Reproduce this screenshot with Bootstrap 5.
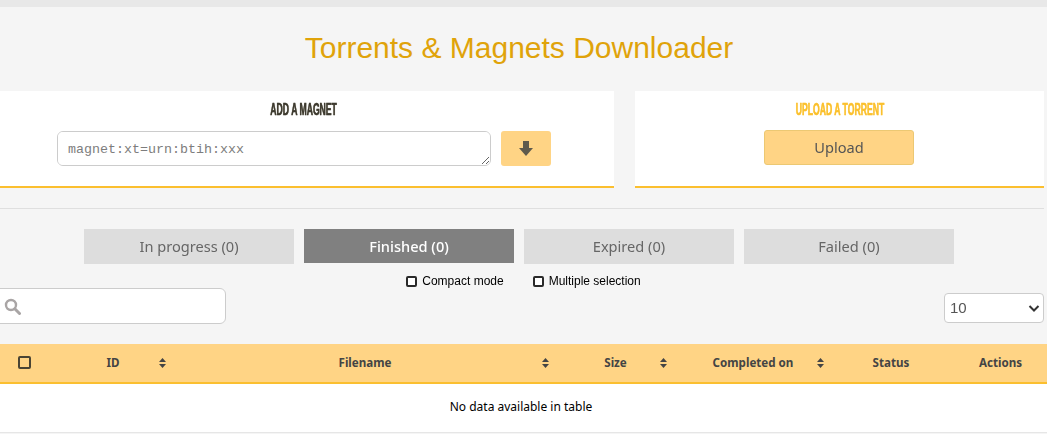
<!DOCTYPE html>
<html lang="en">
<head>
  <meta charset="UTF-8">
  <meta name="viewport" content="width=device-width, initial-scale=1.0">
  <title>Torrents &amp; Magnets Downloader</title>
  <link href="https://cdn.jsdelivr.net/npm/bootstrap@5.3.0/dist/css/bootstrap.min.css" rel="stylesheet">
  <style>
    html, body { overflow: hidden; }
    body { background: #f5f5f5; font-family: "Noto Sans", sans-serif; height: 434px; }
    .top-strip { height: 7px; background: #e8e8e8; }
    .wrap { width: 1050px; margin-left: -6px; }
    .page-title { font-family: "Liberation Sans", Arial, sans-serif; font-size: 30px; line-height: 34px; color: #e0a30a; text-align: center; margin: 0; padding: 24px 0 26px; font-weight: 400; }
    .panel-box { background: #fff; border-bottom: 2px solid #fbbf2f; height: 97px; }
    .panel-left { width: 620px; }
    .panel-right { width: 409px; margin-left: 21px; }
    .panel-head { font-family: "Liberation Sans", sans-serif; font-weight: 700; font-size: 16px; line-height: 16px; text-align: center; margin: 0; padding-top: 11px; height: 40px; text-transform: uppercase; -webkit-text-stroke: .5px currentColor; }
    .panel-head span { display: inline-block; transform: scaleX(.54); white-space: nowrap; }
    .head-dark { color: #3d3a30; text-shadow: 0 0 1px #8a8468; }
    .head-amber { color: #fbc02d; text-shadow: 0 0 1px #fde3a0; }
    .magnet-input { width: 434px; height: 35px; min-height: 35px; font-family: "Liberation Mono", monospace; font-size: 13.33px; line-height: 18px; padding: 9px 10px 7px; border-color: #ccc; }
    .magnet-input::placeholder { color: #7d7d7d; }
    .go-btn { width: 50px; height: 35px; background: #ffd485; border: 0; border-radius: 3px; padding: 0; margin-left: 10px; }
    .go-btn svg { width: 14px; height: 15px; display: block; margin: 0 auto; }
    .upload-btn { width: 150px; height: 35px; background: #ffd485; border: 1px solid #ecc873; color: #555; font-size: 14.6px; padding: 0; line-height: 33px; border-radius: 3px; margin: -1px 0 0 -1px; }
    .divider { border: 0; border-top: 1px solid #c9c9c9; margin: 20px 0 20px; opacity: .5; }
    .tab-row { gap: 10px; }
    .tab-item { width: 210px; height: 35px; line-height: 35px; background: #ddd; color: #666; font-size: 14.6px; text-align: center; }
    .tab-item.is-on { height: 34px; line-height: 34px; background: #808080; color: #fff; font-weight: 500; }
    .opt-row { font-family: "Liberation Sans", Arial, sans-serif; font-size: 12px; color: #000; height: 20px; margin-top: 5px; padding-left: 10px; gap: 30px; }
    .opt-row label { display: flex; align-items: center; height: 24px; }
    .opt-box { width: 11px; height: 11px; border: 2px solid #2a2a2a; border-radius: 2px; background: #fff; margin-right: 5px; margin-left: -1px; }
    .tool-row { height: 36px; margin-top: -1px; }
    .search-box { width: 232px; height: 36px; background: #fff; border: 1px solid #ccc; border-radius: 6px; padding-left: 9px; }
    .search-box svg { width: 17px; height: 17px; }
    .size-select { width: 100px; height: 30px; padding: 2px 5px; font-family: "Liberation Sans", Arial, sans-serif; font-size: 15px; color: #555; border-color: #ccc; border-radius: 4px; margin-top: 5px; background-position: right 3px center; background-size: 12px 10px; background-image: url("data:image/svg+xml,%3csvg xmlns='http://www.w3.org/2000/svg' viewBox='0 0 12 10'%3e%3cpath fill='none' stroke='%23333' stroke-width='2' d='M1.500 3l4.500 4.500L10.500 3'/%3e%3c/svg%3e"); }
    .grid-table { table-layout: fixed; width: 1047px; margin: 20px 0 0; background: #fff; }
    .grid-table th { position: relative; background: #ffd485; height: 39px; padding: 0 9px 0 16px; font-size: 11.6px; font-weight: 700; color: #444; text-align: center; vertical-align: middle; border-bottom: 2px solid #fbbf2f; box-shadow: none; }
    .grid-table td { height: 49px; padding: 0 5px 2px 0; font-size: 12px; color: #000; text-align: center; vertical-align: middle; background: #fff; border-bottom: 1px solid #e6e6e6; box-shadow: none; }
    .sort-mark { position: absolute; right: 4px; top: 14px; width: 7px; height: 10px; }
    .all-box { display: block; width: 13px; height: 13px; border: 2px solid #4a4434; border-radius: 2px; background: transparent; margin: -1px 0 0 1px; }
    .w1 { width: 49px; } .w2 { width: 121px; } .w3 { width: 383px; } .w4 { width: 118px; } .w5 { width: 157px; } .w6 { width: 119px; } .w7 { width: 100px; }
  </style>
</head>
<body>
  <div class="top-strip"></div>
  <div class="wrap">
    <h1 class="page-title">Torrents &amp; Magnets Downloader</h1>
    <div class="d-flex">
      <div class="panel-box panel-left">
        <h2 class="panel-head head-dark"><span>Add a magnet</span></h2>
        <div class="d-flex justify-content-center">
          <textarea class="form-control magnet-input" rows="1" placeholder="magnet:xt=urn:btih:xxx"></textarea>
          <button class="btn go-btn" type="button" aria-label="Add">
            <svg viewBox="0 0 14 15"><path fill="#5f5a4c" d="M4 0h6v7h4l-7 8-7-8h4z"/></svg>
          </button>
        </div>
      </div>
      <div class="panel-box panel-right text-center">
        <h2 class="panel-head head-amber"><span>Upload a torrent</span></h2>
        <button class="btn upload-btn" type="button">Upload</button>
      </div>
    </div>
    <hr class="divider">
    <div class="d-flex justify-content-center tab-row">
      <div class="tab-item">In progress (0)</div>
      <div class="tab-item is-on">Finished (0)</div>
      <div class="tab-item">Expired (0)</div>
      <div class="tab-item">Failed (0)</div>
    </div>
    <div class="d-flex justify-content-center opt-row">
      <label><span class="opt-box"></span>Compact mode</label>
      <label><span class="opt-box"></span>Multiple selection</label>
    </div>
    <div class="d-flex justify-content-between align-items-start tool-row">
      <div class="search-box d-flex align-items-center">
        <svg viewBox="0 0 17 17"><circle cx="7" cy="7" r="5" fill="none" stroke="#a9a5a5" stroke-width="2.400"/><path d="M10.800 10.800l4.700 4.700" stroke="#a9a5a5" stroke-width="3" stroke-linecap="round"/></svg>
      </div>
      <select class="form-select size-select"><option>10</option><option>25</option><option>50</option></select>
    </div>
  </div>
  <table class="table grid-table">
    <thead>
      <tr>
        <th class="w1 px-0"><span class="all-box mx-auto"></span></th>
        <th class="w2">ID<svg class="sort-mark" viewBox="0 0 7 10"><path fill="#444" d="M3.500 0L7 4H0zM3.500 10L0 6h7z"/></svg></th>
        <th class="w3">Filename<svg class="sort-mark" viewBox="0 0 7 10"><path fill="#444" d="M3.500 0L7 4H0zM3.500 10L0 6h7z"/></svg></th>
        <th class="w4">Size<svg class="sort-mark" viewBox="0 0 7 10"><path fill="#444" d="M3.500 0L7 4H0zM3.500 10L0 6h7z"/></svg></th>
        <th class="w5">Completed on<svg class="sort-mark" viewBox="0 0 7 10"><path fill="#444" d="M3.500 0L7 4H0zM3.500 10L0 6h7z"/></svg></th>
        <th class="w6">Status</th>
        <th class="w7">Actions</th>
      </tr>
    </thead>
    <tbody>
      <tr><td colspan="7">No data available in table</td></tr>
    </tbody>
  </table>
  <script src="https://cdn.jsdelivr.net/npm/bootstrap@5.3.0/dist/js/bootstrap.bundle.min.js"></script>
</body>
</html>
